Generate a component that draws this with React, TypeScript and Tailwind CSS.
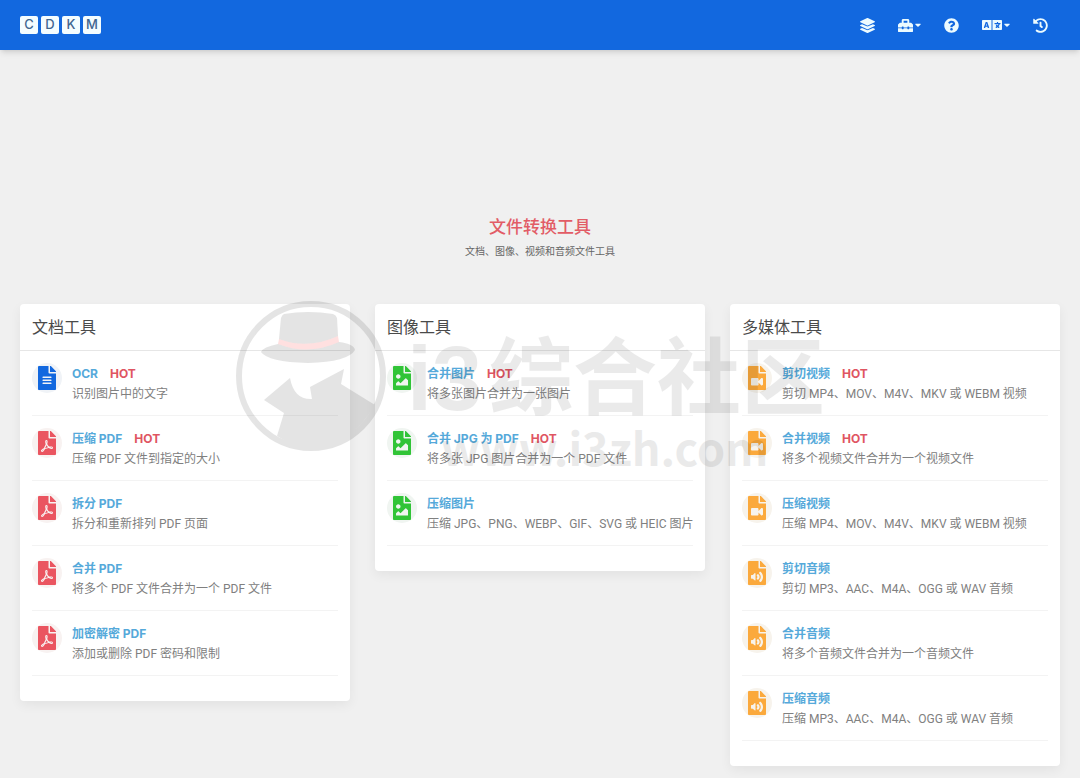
import type { IconType } from "react-icons"
import {
  FaCaretDown,
  FaFileAlt,
  FaFileAudio,
  FaFileImage,
  FaFilePdf,
  FaFileVideo,
  FaHistory,
  FaLanguage,
  FaLayerGroup,
  FaQuestionCircle,
  FaToolbox,
} from "react-icons/fa"

type Tool = {
  icon: IconType
  color: string
  halo: string
  title: string
  text: string
  hot?: boolean
}

const blue = { color: "text-[#1268df]", halo: "bg-[#f0f3f7]" }
const red = { color: "text-[#ea5560]", halo: "bg-[#f8f2f1]" }
const green = { color: "text-[#31c437]", halo: "bg-[#f0f5f1]" }
const orange = { color: "text-[#fba93c]", halo: "bg-[#f7f3ec]" }

const groups: { name: string; tools: Tool[] }[] = [
  {
    name: "文档工具",
    tools: [
      { icon: FaFileAlt, ...blue, title: "OCR", text: "识别图片中的文字", hot: true },
      { icon: FaFilePdf, ...red, title: "压缩 PDF", text: "压缩 PDF 文件到指定的大小", hot: true },
      { icon: FaFilePdf, ...red, title: "拆分 PDF", text: "拆分和重新排列 PDF 页面" },
      { icon: FaFilePdf, ...red, title: "合并 PDF", text: "将多个 PDF 文件合并为一个 PDF 文件" },
      { icon: FaFilePdf, ...red, title: "加密解密 PDF", text: "添加或删除 PDF 密码和限制" },
    ],
  },
  {
    name: "图像工具",
    tools: [
      { icon: FaFileImage, ...green, title: "合并图片", text: "将多张图片合并为一张图片", hot: true },
      { icon: FaFileImage, ...green, title: "合并 JPG 为 PDF", text: "将多张 JPG 图片合并为一个 PDF 文件", hot: true },
      { icon: FaFileImage, ...green, title: "压缩图片", text: "压缩 JPG、PNG、WEBP、GIF、SVG 或 HEIC 图片" },
    ],
  },
  {
    name: "多媒体工具",
    tools: [
      { icon: FaFileVideo, ...orange, title: "剪切视频", text: "剪切 MP4、MOV、M4V、MKV 或 WEBM 视频", hot: true },
      { icon: FaFileVideo, ...orange, title: "合并视频", text: "将多个视频文件合并为一个视频文件", hot: true },
      { icon: FaFileVideo, ...orange, title: "压缩视频", text: "压缩 MP4、MOV、M4V、MKV 或 WEBM 视频" },
      { icon: FaFileAudio, ...orange, title: "剪切音频", text: "剪切 MP3、AAC、M4A、OGG 或 WAV 音频" },
      { icon: FaFileAudio, ...orange, title: "合并音频", text: "将多个音频文件合并为一个音频文件" },
      { icon: FaFileAudio, ...orange, title: "压缩音频", text: "压缩 MP3、AAC、M4A、OGG 或 WAV 音频" },
    ],
  },
]

function Header() {
  return (
    <header className="flex h-[50px] items-center justify-between bg-[#1268df] px-5 shadow-md">
      <a href="#" className="flex gap-[3px]">
        {["C", "D", "K", "M"].map((letter) => (
          <span
            key={letter}
            className="flex size-[18px] items-center justify-center rounded-xs bg-[#f4fdff] text-[13px] font-medium text-[#41668f]"
          >
            {letter}
          </span>
        ))}
      </a>

      <nav className="flex items-center gap-[23px] pr-3 text-[#ecfbff]">
        <button aria-label="Layers"><FaLayerGroup className="size-[15px]" /></button>
        <button aria-label="Tools" className="flex items-center gap-[2px]">
          <FaToolbox className="size-[15px]" />
          <FaCaretDown className="h-[10px] w-[6px]" />
        </button>
        <button aria-label="Help"><FaQuestionCircle className="size-[15px]" /></button>
        <button aria-label="Language" className="flex items-center gap-[2px]">
          <FaLanguage className="size-5" />
          <FaCaretDown className="h-[10px] w-[6px]" />
        </button>
        <button aria-label="History"><FaHistory className="size-[15px]" /></button>
      </nav>
    </header>
  )
}

function ToolRow({ icon: Icon, color, halo, title, text, hot }: Tool) {
  return (
    <li className="flex h-[65px] gap-[10px] border-b border-[#f3f3f3] pt-3">
      <span className={`flex size-[30px] shrink-0 items-center justify-center rounded-full ${halo}`}>
        <Icon className={`size-6 ${color}`} />
      </span>
      <div className="min-w-0 pt-px">
        <div className="flex gap-3 text-xs leading-5 font-bold">
          <a href="#" className="text-[#55a9da]">{title}</a>
          {hot && <span className="text-[#df5562]">HOT</span>}
        </div>
        <p className="font-['Roboto','Noto_Sans_CJK_SC',sans-serif] text-xs leading-5 whitespace-nowrap text-[#808080]">
          {text}
        </p>
      </div>
    </li>
  )
}

function Watermark() {
  return (
    <svg
      viewBox="0 0 590 190"
      className="pointer-events-none absolute -top-[6px] left-1/2 -ml-[304px] w-[590px]"
      aria-hidden="true"
    >
      <g fill="#000" opacity="0.1">
        <circle cx="75" cy="78" r="72" fill="none" stroke="#000" strokeWidth="6" />
        <path d="M45 20 Q46 17 48 16 Q72 12 97 16 Q100 17 101 20 L102 38 Q72 52 43 41 Z" />
        <path d="M42 46 Q72 58 103 44 Q118 46 119 52 Q112 64 72 65 Q32 64 25 54 Q27 49 42 46 Z" />
        <path d="M54 80 Q58 102 76 101 L74 89 L108 71 L105 86 L139 107 Q116 147 75 149 Q57 149 41 138 L48 115 L28 102 Z" />
      </g>
      <path d="M43 41 Q72 52 102 38 L103 44 Q72 58 42 46 Z" fill="#f66" opacity="0.2" />
      <g fill="#000" opacity="0.08" fontFamily="'Noto Sans CJK SC', sans-serif">
        <text x="171" y="112" fontSize="90" fontWeight="700" fontFamily="'Liberation Sans', sans-serif">i3</text>
        <text x="253" y="110" fontSize="84" fontWeight="700">综合社区</text>
        <text x="205" y="168" fontSize="45" fontWeight="700">www.i3zh.com</text>
      </g>
    </svg>
  )
}

export default function App() {
  return (
    <div className="min-h-screen bg-[#f0f0f0] font-['Inter','Noto_Sans_CJK_SC',sans-serif]" lang="zh-CN">
      <Header />

      <main className="px-5 pt-[165px] pb-3">
        <div className="text-center">
          <h1 className="text-[17px] leading-6 font-medium text-[#e25c66]">文件转换工具</h1>
          <p className="text-[10px] leading-6 text-[#666]">文档、图像、视频和音频文件工具</p>
        </div>

        <div className="relative mt-[41px] grid grid-cols-3 items-start gap-[25px]">
          {groups.map((group) => (
            <section key={group.name} className="rounded bg-white pb-[25px] shadow-[0_4px_12px_rgba(0,0,0,0.06)]">
              <h2 className="border-b border-[#e6e6e6] px-3 py-[11px] text-base leading-6 text-[#4a4a4a]">{group.name}</h2>
              <ul className="px-3">
                {group.tools.map((tool) => (
                  <ToolRow key={tool.title} {...tool} />
                ))}
              </ul>
            </section>
          ))}
          <Watermark />
        </div>
      </main>
    </div>
  )
}
